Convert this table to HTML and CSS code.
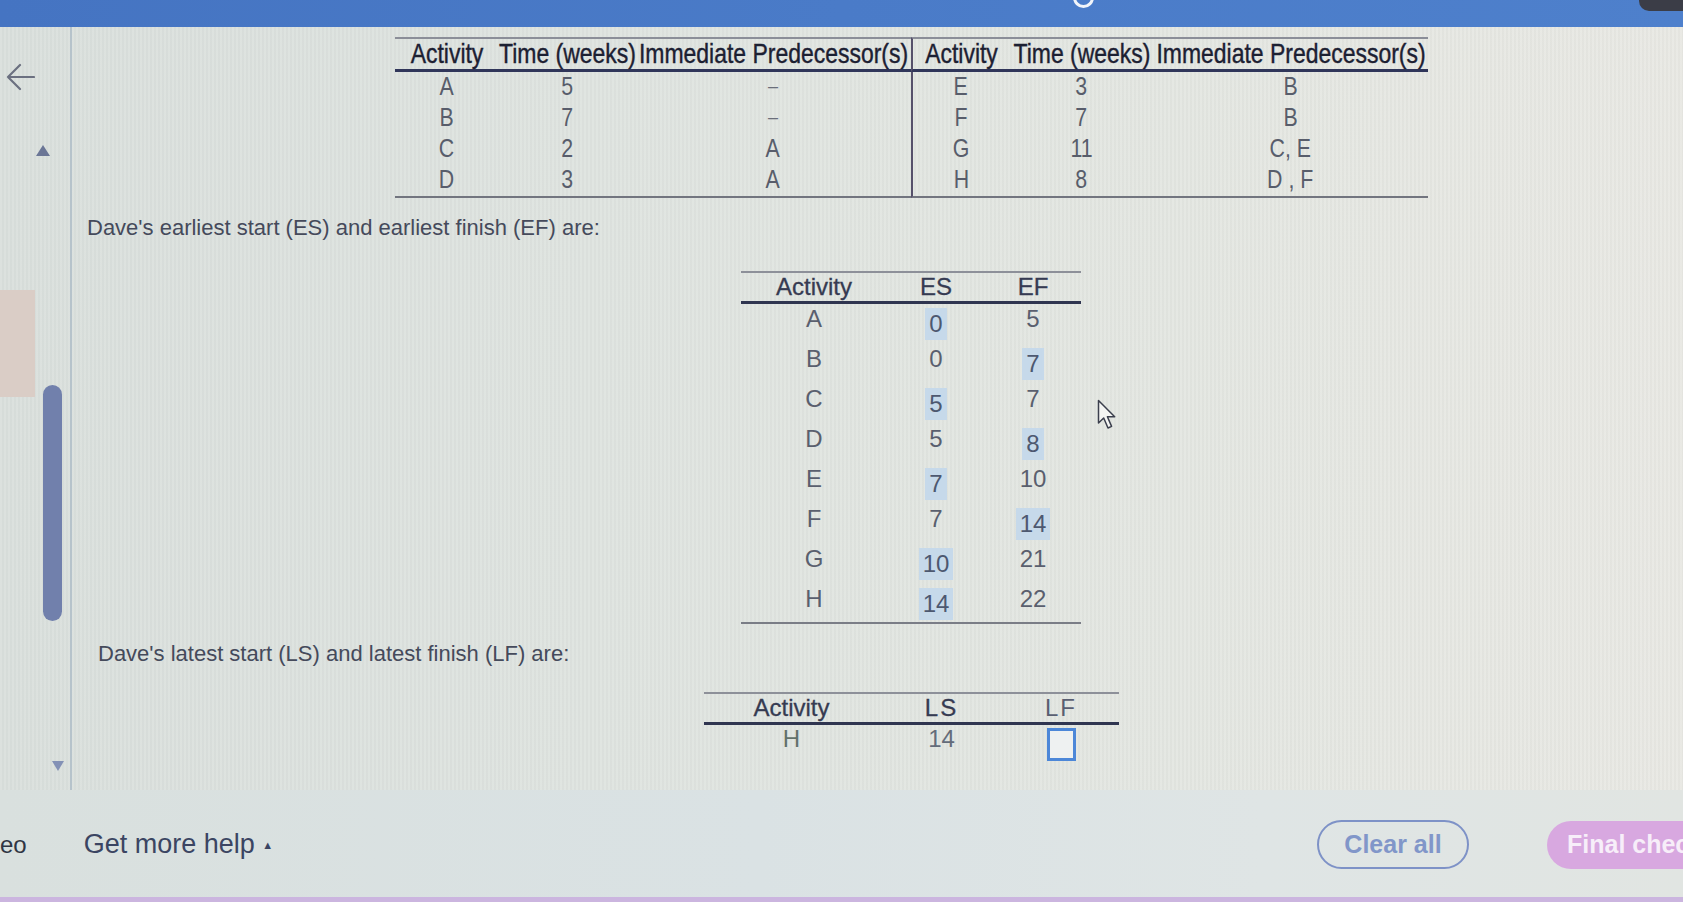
FILE: index.html
```html
<!DOCTYPE html>
<html lang="en">
<head>
<meta charset="utf-8">
<title>Dave's project schedule</title>
<link rel="stylesheet" href="styles.css">
</head>
<body>
<div class="screen">
  <header class="topbar">
    <span class="ring"></span>
    <span class="corner"></span>
  </header>
  <div class="workspace">
    <aside class="sidebar">
      <div class="side-left">
        <svg class="back" viewBox="0 0 30 30" aria-hidden="true">
          <path d="M29 15H3M15 3L3 15l12 12" fill="none" stroke="#6b7080" stroke-width="2.2" stroke-linecap="round" stroke-linejoin="round"/>
        </svg>
        <div class="tab"></div>
      </div>
      <div class="scroll">
        <span class="tri-up"></span>
        <span class="thumb"></span>
        <span class="tri-down"></span>
      </div>
    </aside>
    <main class="content">
      <table class="given">
        <thead>
          <tr>
            <th class="g1"><span class="nx">Activity</span></th>
            <th class="g2"><span class="nx">Time (weeks)</span></th>
            <th class="g3"><span class="nx">Immediate Predecessor(s)</span></th>
            <th class="g4 split"><span class="nx">Activity</span></th>
            <th class="g5"><span class="nx">Time (weeks)</span></th>
            <th class="g6"><span class="nx">Immediate Predecessor(s)</span></th>
          </tr>
        </thead>
        <tbody>
          <tr><td><span class="nx">A</span></td><td><span class="nx">5</span></td><td class="dash">–</td><td class="split"><span class="nx">E</span></td><td><span class="nx">3</span></td><td><span class="nx">B</span></td></tr>
          <tr><td><span class="nx">B</span></td><td><span class="nx">7</span></td><td class="dash">–</td><td class="split"><span class="nx">F</span></td><td><span class="nx">7</span></td><td><span class="nx">B</span></td></tr>
          <tr><td><span class="nx">C</span></td><td><span class="nx">2</span></td><td><span class="nx">A</span></td><td class="split"><span class="nx">G</span></td><td><span class="nx">11</span></td><td><span class="nx">C, E</span></td></tr>
          <tr><td><span class="nx">D</span></td><td><span class="nx">3</span></td><td><span class="nx">A</span></td><td class="split"><span class="nx">H</span></td><td><span class="nx">8</span></td><td><span class="nx">D , F</span></td></tr>
        </tbody>
      </table>

      <p class="prompt">Dave's earliest start (ES) and earliest finish (EF) are:</p>

      <table class="es">
        <thead>
          <tr><th class="e1">Activity</th><th class="e2">ES</th><th class="e3">EF</th></tr>
        </thead>
        <tbody>
          <tr><td>A</td><td><span class="ans">0</span></td><td>5</td></tr>
          <tr><td>B</td><td>0</td><td><span class="ans">7</span></td></tr>
          <tr><td>C</td><td><span class="ans">5</span></td><td>7</td></tr>
          <tr><td>D</td><td>5</td><td><span class="ans">8</span></td></tr>
          <tr><td>E</td><td><span class="ans">7</span></td><td>10</td></tr>
          <tr><td>F</td><td>7</td><td><span class="ans">14</span></td></tr>
          <tr><td>G</td><td><span class="ans">10</span></td><td>21</td></tr>
          <tr><td>H</td><td><span class="ans">14</span></td><td>22</td></tr>
        </tbody>
      </table>

      <p class="prompt p2">Dave's latest start (LS) and latest finish (LF) are:</p>

      <table class="ls">
        <thead>
          <tr><th class="l1">Activity</th><th class="l2">LS</th><th class="l3">LF</th></tr>
        </thead>
        <tbody>
          <tr><td class="hcell">H</td><td>14</td><td><span class="blank"></span></td></tr>
        </tbody>
      </table>
    </main>
  </div>
  <footer class="footer">
    <span class="video">eo</span>
    <span class="help">Get more help <span class="caret">▲</span></span>
    <div class="actions">
      <button class="clear">Clear all</button>
      <button class="final">Final check</button>
    </div>
  </footer>
  <div class="strip"></div>
  <svg class="cursor" viewBox="0 0 21 31" aria-hidden="true">
    <path d="M1.5 1.5V24l5.2-5 4.3 10 3.6-1.6-4.2-9.7h7.3z" fill="#f4f5f3" stroke="#3b3f4d" stroke-width="1.5" stroke-linejoin="round"/>
  </svg>
</div>
</body>
</html>
```

FILE: styles.css
```css
* { box-sizing: border-box; margin: 0; padding: 0; }

html, body {
  width: 1683px;
  height: 902px;
  overflow: hidden;
}

body {
  font-family: "Liberation Sans", Arial, sans-serif;
  background: #e0e4e0;
}

.screen {
  position: relative;
  width: 1683px;
  height: 902px;
  display: flex;
  flex-direction: column;
  overflow: hidden;
  background:
    repeating-linear-gradient(90deg, rgba(255,255,255,0.07) 0 2px, rgba(0,0,0,0.015) 2px 4px),
    linear-gradient(90deg, #d9dfdc 0%, #dee3df 35%, #e3e6e1 70%, #e8e8e3 100%);
}

/* top bar */
.topbar {
  height: 27px;
  flex: none;
  display: flex;
  align-items: flex-start;
  background: linear-gradient(90deg, #4574c2 0%, #4a7bc8 50%, #4e80cc 100%);
  overflow: hidden;
}
.ring {
  width: 21px;
  height: 21px;
  margin-left: 1073px;
  margin-top: -13px;
  border: 3px solid #f2f5fa;
  border-radius: 50%;
}
.corner {
  margin-left: auto;
  width: 44px;
  height: 11px;
  background: #3b3d47;
  border-bottom-left-radius: 10px;
}

/* workspace */
.workspace {
  height: 763px;
  flex: none;
  display: flex;
  overflow: hidden;
}

.sidebar {
  width: 72px;
  flex: none;
  display: flex;
  border-right: 2px solid #b6c3cb;
}
.side-left {
  width: 36px;
  display: flex;
  flex-direction: column;
}
.back {
  margin: 35px 0 0 5px;
  width: 30px;
  height: 30px;
}
.tab {
  margin-top: 198px;
  width: 35px;
  height: 107px;
  background: #dacdc6;
}
.scroll {
  width: 34px;
  display: flex;
  flex-direction: column;
  align-items: flex-start;
}
.tri-up {
  margin-top: 118px;
  width: 0;
  height: 0;
  border-left: 7px solid transparent;
  border-right: 7px solid transparent;
  border-bottom: 11px solid #6b7696;
}
.thumb {
  margin: 229px 0 0 7px;
  width: 19px;
  height: 236px;
  border-radius: 10px;
  background: #7180ac;
}
.tri-down {
  margin: 140px 0 0 16px;
  width: 0;
  height: 0;
  border-left: 6px solid transparent;
  border-right: 6px solid transparent;
  border-top: 10px solid #8391b6;
}

.content {
  width: 1663px;
  flex: none;
  padding-left: 15px;
  display: flex;
  flex-direction: column;
}

/* given data table */
.given {
  align-self: center;
  margin-top: 10px;
  table-layout: fixed;
  width: 1033px;
  border-collapse: separate;
  border-spacing: 0;
}
.nx {
  display: inline-block;
  white-space: nowrap;
  transform: scaleX(0.82);
}
.given th {
  height: 30px;
  line-height: 30px;
  padding: 0;
  font-size: 28px;
  font-weight: normal;
  color: #1c2032;
  -webkit-text-stroke: 0.4px #1c2032;
  white-space: nowrap;
  border-top: 2px solid #8b8e98;
  border-bottom: 3px solid #30365a;
}
.given th .nx {
  display: flex;
  justify-content: center;
  width: 100%;
}
.given .g1 { width: 104px; }
.given .g2 { width: 137px; }
.given .g3 { width: 275px; }
.given .g4 { width: 99px; }
.given .g5 { width: 144px; }
.given .g6 { width: 274px; }
.given td {
  height: 31px;
  line-height: 29px;
  padding: 0 0 2px;
  font-size: 26px;
  color: #585d6b;
  text-align: center;
  vertical-align: top;
}
.given tbody tr:last-child td {
  border-bottom: 2px solid #72757f;
}
.given .split {
  border-left: 2px solid #55506a;
}
.given .dash {
  font-size: 18px;
  color: #6a6e7a;
}

/* prompts */
.prompt {
  margin-top: 17px;
  font-size: 22px;
  line-height: 26px;
  color: #454a5b;
}
.p2 {
  margin-left: 11px;
}

/* ES / EF table */
.es, .ls {
  align-self: center;
  border-collapse: separate;
  border-spacing: 0;
}
.es {
  margin-top: 30px;
}
.es th, .ls th {
  height: 28px;
  line-height: 28px;
  padding: 0;
  font-size: 24px;
  font-weight: normal;
  color: #363b52;
  -webkit-text-stroke: 0.3px #363b52;
  border-top: 2px solid #8d9099;
  border-bottom: 3px solid #2f3550;
  text-align: center;
}
.es .e1 { width: 146px; }
.es .e2 { width: 98px; }
.es .e3 { width: 96px; }
.es td {
  height: 40px;
  padding: 0;
  line-height: 30px;
  font-size: 24px;
  color: #5a5f6e;
  text-align: center;
  vertical-align: top;
}
.es tbody tr:last-child td {
  border-bottom: 2px solid #7a7d86;
}
.ans {
  display: inline-block;
  vertical-align: top;
  margin-top: 4px;
  height: 32px;
  line-height: 32px;
  padding: 0 4px;
  background: #c6d9ea;
  color: #4d5870;
}

/* LS / LF table */
.ls {
  margin-top: 25px;
}
.ls .l1 { width: 176px; }
.ls .l2 { width: 124px; letter-spacing: 2px; }
.ls .l3 { width: 115px; letter-spacing: 2px; color: #5a5f72; -webkit-text-stroke: 0; }
.ls td {
  height: 40px;
  padding: 0;
  line-height: 28px;
  font-size: 24px;
  color: #646c7a;
  text-align: center;
  vertical-align: top;
}
.ls .hcell { color: #62716a; }
.blank {
  display: inline-block;
  vertical-align: top;
  margin-top: 3px;
  width: 29px;
  height: 33px;
  border: 3px solid #4c87d8;
  background: #eef1f1;
}

/* footer */
.footer {
  height: 107px;
  flex: none;
  display: flex;
  align-items: center;
  padding-top: 2px;
  background: linear-gradient(90deg, #d9e0de 0%, #dae2e4 45%, #dfe5e5 75%, #e1e5e2 100%);
}
.video {
  font-size: 24px;
  color: #2f3543;
}
.help {
  margin-left: 57px;
  font-size: 27px;
  color: #3b4562;
  white-space: nowrap;
}
.caret {
  font-size: 11px;
  vertical-align: 4px;
}
.actions {
  margin-left: auto;
  margin-right: -64px;
  display: flex;
  align-items: center;
  gap: 78px;
}
.clear {
  width: 152px;
  height: 49px;
  border: 2px solid #7e92c7;
  border-radius: 25px;
  background: transparent;
  font-family: "Liberation Sans", Arial, sans-serif;
  font-size: 25px;
  font-weight: bold;
  color: #8196c9;
}
.final {
  width: 200px;
  height: 48px;
  border: none;
  border-radius: 25px;
  background: #d8a8e0;
  text-align: left;
  padding-left: 20px;
  font-family: "Liberation Sans", Arial, sans-serif;
  font-size: 25px;
  font-weight: bold;
  color: #f7eef9;
}

.strip {
  height: 5px;
  flex: none;
  background: #cbb5df;
}

/* mouse pointer overlay */
.cursor {
  position: absolute;
  left: 1097px;
  top: 399px;
  width: 21px;
  height: 31px;
}
```
